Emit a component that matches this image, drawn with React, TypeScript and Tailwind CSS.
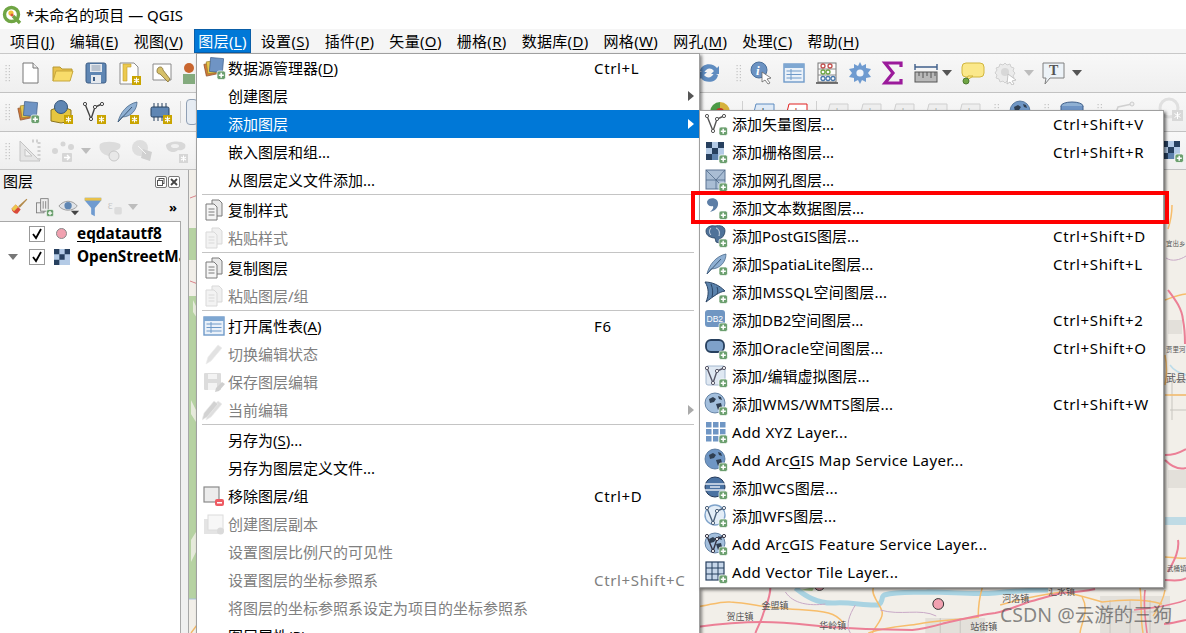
import type { ReactNode } from "react";

const Ic = ({ children, size = 24, box = 24 }: { children: ReactNode; size?: number; box?: number }) => (
  <svg width={size} height={size} viewBox={`0 0 ${box} ${box}`} className="flex-none">
    {children}
  </svg>
);

// badges
const Plus = () => (
  <g>
    <rect x="15" y="15" width="8.5" height="8.5" rx="2" fill="#6b9f6e" stroke="#fff" strokeWidth=".7" />
    <path d="M19.2 16.8v5M16.8 19.2h5" stroke="#fff" strokeWidth="1.5" />
  </g>
);
const Gear = ({ c = "#c9a400" }: { c?: string }) => (
  <g>
    <rect x="15" y="15" width="9" height="9" fill={c} />
    <path d="M19.5 16.5v6M17 18l5 3M22 18l-5 3" stroke="#fff" strokeWidth="1.1" />
  </g>
);

const LayersStack = () => (
  <>
    <rect x="3" y="7" width="12" height="12" fill="#d4793a" stroke="#8a4d22" strokeWidth=".7" transform="rotate(-12 9 13)" />
    <rect x="5" y="5" width="12" height="12" fill="#e9c84f" stroke="#9a8226" strokeWidth=".7" transform="rotate(-8 11 11)" />
    <rect x="8" y="2" width="13" height="14" fill="#6f94c4" stroke="#3f5f8a" strokeWidth=".7" transform="rotate(5 14 9)" />
  </>
);
const VectorV = ({ c = "#555" }: { c?: string }) => (
  <>
    <path d="M3 4l6 15 4-12 7-3" fill="none" stroke={c} strokeWidth="1.4" />
    <circle cx="3" cy="4" r="1.6" fill="#fff" stroke={c} />
    <circle cx="9" cy="19" r="1.6" fill="#fff" stroke={c} />
    <circle cx="13" cy="7" r="1.6" fill="#fff" stroke={c} />
    <circle cx="20" cy="4" r="1.6" fill="#fff" stroke={c} />
  </>
);
const Checker = () => (
  <>
    <rect x="2" y="2" width="18" height="18" fill="#b4cbe6" />
    <path d="M2 2h6v6H2zM14 2h6v6h-6zM8 8h6v6H8zM2 14h6v6H2z" fill="#27405f" />
    <path d="M8 14h6v6H8z" fill="#5e82ad" />
  </>
);
const Quill = () => (
  <>
    <path d="M3 22C5 13 12 4 22 2c0 8-6 15-15 15z" fill="#8fb0d3" stroke="#4a6a8c" strokeWidth=".8" />
    <path d="M3 22L17 7" stroke="#3f5a78" strokeWidth="1" />
  </>
);
const Globe = ({ dark = false }: { dark?: boolean }) => (
  <>
    <circle cx="11" cy="11" r="10" fill={dark ? "#6f96c4" : "#a3bfdd"} stroke="#4a6c93" strokeWidth=".8" />
    <path d="M5 7l4-2 3 2-2 3-4 1zM12 12l5-1 1 4-4 3zM14 4l3 1 1 3-3-1z" fill="#2f3f52" />
  </>
);
const DocCopy = ({ off = false }: { off?: boolean }) => {
  const s = off ? "#d9d9d9" : "#7b7b7b";
  return (
    <>
      <path d="M10 2h7l3 3v13H10z" fill={off ? "#f0f0f0" : "#e8e8e8"} stroke={s} />
      <path d="M4 6h8l3 3v13H4z" fill={off ? "#f3f3f3" : "#f5f5f5"} stroke={s} />
      <path d="M6.500 11h6M6.500 14h6M6.500 17h6" stroke={s} />
    </>
  );
};
const Pencil = ({ c = "#e2e2e2" }: { c?: string }) => (
  <path d="M4 22l2-7L16 3l4 3L9 19z" fill={c} stroke="#ececec" strokeWidth=".6" />
);
const Table = () => (
  <>
    <rect x="2" y="3" width="20" height="18" fill="#eaf1f9" stroke="#6f9ac9" strokeWidth="1.4" />
    <rect x="2" y="3" width="20" height="4" fill="#7ea7d2" />
    <path d="M4.500 10h15M4.500 13.500h15M4.500 17h15M9 8v11" stroke="#6f9ac9" />
  </>
);
const Grip = () => (
  <svg width="6" height="18" viewBox="0 0 6 18" className="flex-none">
    {[1, 4, 7, 10, 13, 16].map((y) => (
      <g key={y} fill="#c4c4c4">
        <rect x="0.5" y={y} width="1.2" height="1.2" />
        <rect x="3.8" y={y} width="1.2" height="1.2" />
      </g>
    ))}
  </svg>
);
const Drop = ({ off = false }: { off?: boolean }) => (
  <svg width="10" height="6" viewBox="0 0 10 6" className="flex-none">
    <path d="M0 0h10L5 6z" fill={off ? "#bdbdbd" : "#555"} />
  </svg>
);
const Cell = ({ children }: { children?: ReactNode }) => (
  <div className="flex w-[33px] flex-none items-center justify-center">{children}</div>
);

const AbcLabel = ({ c, bg, s }: { c: string; bg: string; s: string }) => (
  <svg width="24" height="20" viewBox="0 0 24 20" className="flex-none">
    <path d="M1 18L5 2h18v16z" fill={bg} stroke={s} />
    <text x="6" y="13" fontSize="9" fontFamily="Liberation Sans" fill={c}>abc</text>
  </svg>
);

// main menu data, & marks the mnemonic like in Qt
type Item = { t?: string; key?: string; icon?: ReactNode; off?: boolean; arrow?: boolean; hot?: boolean; sep?: boolean };

const mainItems: Item[] = [
  { t: "数据源管理器(&D)", key: "Ctrl+L", icon: <Ic><LayersStack /><Plus /></Ic> },
  { t: "创建图层", arrow: true },
  { t: "添加图层", arrow: true, hot: true },
  { t: "嵌入图层和组..." },
  { t: "从图层定义文件添加..." },
  { sep: true },
  { t: "复制样式", icon: <Ic><DocCopy /></Ic> },
  { t: "粘贴样式", off: true, icon: <Ic><DocCopy off /></Ic> },
  { sep: true },
  { t: "复制图层", icon: <Ic><DocCopy /></Ic> },
  { t: "粘贴图层/组", off: true, icon: <Ic><DocCopy off /></Ic> },
  { sep: true },
  { t: "打开属性表(&A)", key: "F6", icon: <Ic><Table /></Ic> },
  { t: "切换编辑状态", off: true, icon: <Ic><Pencil /></Ic> },
  {
    t: "保存图层编辑",
    off: true,
    icon: (
      <Ic>
        <rect x="2" y="3" width="17" height="17" rx="1" fill="#dcdcdc" />
        <rect x="6" y="4" width="9" height="5" fill="#f3f3f3" />
        <rect x="6" y="13" width="9" height="7" fill="#f3f3f3" />
        <path d="M13 22l1-4 6-6 3 2-6 7z" fill="#cfcfcf" />
      </Ic>
    ),
  },
  {
    t: "当前编辑",
    off: true,
    arrow: true,
    icon: (
      <Ic>
        <Pencil c="#dedede" />
        <g transform="translate(-4 0)"><Pencil c="#d2d2d2" /></g>
      </Ic>
    ),
  },
  { sep: true },
  { t: "另存为(&S)..." },
  { t: "另存为图层定义文件..." },
  {
    t: "移除图层/组",
    key: "Ctrl+D",
    icon: (
      <Ic>
        <rect x="2" y="3" width="15" height="15" fill="#ececec" stroke="#8a8a8a" strokeWidth="1.2" />
        <rect x="13" y="15" width="9" height="7" rx="2" fill="#ee5a62" />
        <rect x="15" y="18" width="5" height="1.5" fill="#fff" />
      </Ic>
    ),
  },
  {
    t: "创建图层副本",
    off: true,
    icon: (
      <Ic>
        <rect x="2" y="7" width="14" height="15" fill="#e4e4e4" />
        <rect x="6" y="3" width="15" height="15" fill="#f7f7f7" stroke="#dcdcdc" />
        <circle cx="18.500" cy="19" r="3.500" fill="#dadada" />
      </Ic>
    ),
  },
  { t: "设置图层比例尺的可见性", off: true },
  { t: "设置图层的坐标参照系", key: "Ctrl+Shift+C", off: true },
  { t: "将图层的坐标参照系设定为项目的坐标参照系", off: true },
  { t: "图层属性(&P)..." },
];

const subItems: Item[] = [
  { t: "添加矢量图层...", key: "Ctrl+Shift+V", icon: <Ic><VectorV /><Plus /></Ic> },
  { t: "添加栅格图层...", key: "Ctrl+Shift+R", icon: <Ic><Checker /><Plus /></Ic> },
  {
    t: "添加网孔图层...",
    icon: (
      <Ic>
        <rect x="2" y="2" width="19" height="19" fill="#a9bdd4" stroke="#5c7594" />
        <path d="M2 2l10 10L21 2M2 12h19M12 12v9M12 12L21 21" fill="none" stroke="#4f6a8a" strokeWidth=".8" />
        <Plus />
      </Ic>
    ),
  },
  {
    t: "添加文本数据图层...",
    icon: (
      <Ic>
        <path d="M5 3c5-2 10 1 9 6-1 4-4 6-8 7 2-2 4-4 3-6-3 1-6-1-6-4 0-1 1-2 2-3z" fill="#5d7ea6" />
        <Plus />
      </Ic>
    ),
  },
  {
    t: "添加PostGIS图层...",
    key: "Ctrl+Shift+D",
    icon: (
      <Ic>
        <path d="M2 7c0-4 5-6 9-5 5-1 10 0 10 5 0 4-3 7-5 8l-1 4-3-1-1-4C7 14 2 12 2 7z" fill="#4f7299" stroke="#26405e" strokeWidth=".8" />
        <path d="M7 4c-2 2-2 5 0 7M12 4c3 1 4 4 3 8" fill="none" stroke="#dfe8f2" strokeWidth=".9" />
        <Plus />
      </Ic>
    ),
  },
  { t: "添加SpatiaLite图层...", key: "Ctrl+Shift+L", icon: <Ic><Quill /><Plus /></Ic> },
  {
    t: "添加MSSQL空间图层...",
    icon: (
      <Ic>
        <path d="M1 2c7 0 14 3 20 9-6 1-11 5-19 11 3-7 3-14-1-20z" fill="#5b83ad" stroke="#2a4566" />
        <path d="M7 4c2 5 2 9 1 13M13 7c1 3 1 5 0 7" stroke="#2a4566" fill="none" />
        <Plus />
      </Ic>
    ),
  },
  {
    t: "添加DB2空间图层...",
    key: "Ctrl+Shift+2",
    icon: (
      <Ic>
        <rect x="1" y="2" width="20" height="17" rx="3" fill="#7096c2" />
        <text x="2.500" y="14" fontSize="8.500" fontFamily="Liberation Sans" fill="#fff">DB2</text>
        <Plus />
      </Ic>
    ),
  },
  {
    t: "添加Oracle空间图层...",
    key: "Ctrl+Shift+O",
    icon: (
      <Ic>
        <rect x="2" y="4" width="18" height="12" rx="5" fill="#7ea1c9" stroke="#27405f" strokeWidth="1.8" />
        <Plus />
      </Ic>
    ),
  },
  {
    t: "添加/编辑虚拟图层...",
    icon: (
      <Ic>
        <rect x="2" y="2" width="19" height="19" rx="2" fill="#dfe8f2" stroke="#a4b8cf" />
        <VectorV c="#556" />
        <Plus />
      </Ic>
    ),
  },
  { t: "添加WMS/WMTS图层...", key: "Ctrl+Shift+W", icon: <Ic><Globe /><Plus /></Ic> },
  {
    t: "Add XYZ Layer...",
    icon: (
      <Ic>
        <g fill="#6f96c4">
          {[2, 9, 16].map((y) => [2, 9, 16].map((x) => <rect key={`${x}-${y}`} x={x} y={y} width="5.500" height="5.500" />))}
        </g>
        <Plus />
      </Ic>
    ),
  },
  { t: "Add Arc&GIS Map Service Layer...", icon: <Ic><Globe dark /><Plus /></Ic> },
  {
    t: "添加WCS图层...",
    icon: (
      <Ic>
        <circle cx="11" cy="11" r="10" fill="#4a72a2" stroke="#23395a" />
        <path d="M1 8h20M1 14h20M6 11h10" stroke="#dfe8f2" strokeWidth="1.6" />
        <Plus />
      </Ic>
    ),
  },
  {
    t: "添加WFS图层...",
    icon: (
      <Ic>
        <circle cx="11" cy="11" r="10" fill="#e3edf7" stroke="#7fa3ca" strokeWidth="1.4" />
        <VectorV c="#4a5f78" />
        <Plus />
      </Ic>
    ),
  },
  {
    t: "Add Ar&cGIS Feature Service Layer...",
    icon: (
      <Ic>
        <Globe />
        <VectorV c="#334" />
        <Plus />
      </Ic>
    ),
  },
  {
    t: "Add Vector Tile Layer...",
    icon: (
      <Ic>
        <rect x="2" y="2" width="18" height="18" fill="#c7d7ea" stroke="#27405f" strokeWidth="1.2" />
        <path d="M8 2v18M14 2v18M2 8h18M2 14h18" stroke="#27405f" />
        <Plus />
      </Ic>
    ),
  },
];

const Mn = ({ t }: { t: string }) => {
  const i = t.indexOf("&");
  if (i < 0) return <>{t}</>;
  return (
    <>
      {t.slice(0, i)}
      <u className="underline-offset-2">{t[i + 1]}</u>
      {t.slice(i + 2)}
    </>
  );
};

// Latin in the reference font runs wider than Noto Sans, so those rows get some tracking
const tracking = (t: string) => {
  if (t.startsWith("Add")) return "tracking-[0.37px]";
  if (/WMS|WCS|WFS|MSSQL|Oracle/.test(t)) return "tracking-[0.25px]";
  return "";
};

const Row = ({ it, textW, iconW, pad = "" }: { it: Item; textW: string; iconW: string; pad?: string }) => {
  if (it.sep) return <div className="mx-[5px] mb-px h-px bg-[#c4c4c4]" />;
  const color = it.hot ? "bg-[#0078d7] text-white" : it.off ? "text-[#808080]" : "text-black";
  return (
    <div className={`flex h-[28px] flex-none items-center ${pad} ${color}`}>
      <div className={`flex flex-none justify-center ${iconW}`}>{it.icon}</div>
      <div className={`${textW} flex-none whitespace-nowrap ${tracking(it.t || "")}`}><Mn t={it.t || ""} /></div>
      <div className="whitespace-nowrap tracking-[0.65px]">{it.key}</div>
      {it.arrow && (
        <svg width="6" height="10" viewBox="0 0 6 10" className="absolute left-[491px]">
          <path d="M0 0l6 5-6 5z" fill={it.hot ? "#fff" : it.off ? "#aaa" : "#555"} />
        </svg>
      )}
    </div>
  );
};

const menus = [
  "项目(&J)",
  "编辑(&E)",
  "视图(&V)",
  "图层(&L)",
  "设置(&S)",
  "插件(&P)",
  "矢量(&O)",
  "栅格(&R)",
  "数据库(&D)",
  "网格(&W)",
  "网孔(&M)",
  "处理(&C)",
  "帮助(&H)",
];

const QLogo = () => (
  <svg width="20" height="20" viewBox="0 0 20 20" className="flex-none">
    <circle cx="9.500" cy="9.500" r="7" fill="#fff" stroke="#6fa544" strokeWidth="3.400" />
    <path d="M11 11l7 7" stroke="#6fa544" strokeWidth="3.400" />
    <circle cx="9" cy="8" r="2.600" fill="#f0c23c" />
    <circle cx="10" cy="10" r="1.600" fill="#d8553a" />
  </svg>
);

// the map: roads and labels only show at the edges of the open menus
const MapView = () => (
  <svg viewBox="188 170 998 463" className="h-full w-full" preserveAspectRatio="none">
    <rect x="188" y="170" width="998" height="463" fill="#f2efe9" />
    <path d="M188 228h9v32h-9zM188 296h9v303h-9z" fill="#b6d2a2" />
    <path d="M190 540l5-8v20l-5 10zM190 400l5 10v12l-5-8zM192 300l4 8v10l-4-6z" fill="#e6eadb" />
    <path d="M188 599h9" stroke="#a8c0dc" />
    <path d="M190 633l6-8" stroke="#f2b866" strokeWidth="1.400" />
    <path d="M189 281l8 3M189 198l8-3" stroke="#d9848a" />
    {/* rivers */}
    <path d="M795 588c10 8 22 16 40 15 16-1 30 3 43 2 6-4 2-8 6-10 14-4 30-2 44-3 24 0 46 3 67 1 20-2 36-3 53-3" fill="none" stroke="#a9d3e2" strokeWidth="5" />
    <path d="M1165 517h21v8h-21zM1165 430l21 3" fill="#a9d3e2" opacity=".7" />
    <path d="M1170 365c4 6 10 8 16 10" stroke="#bcdcea" strokeWidth="1.500" fill="none" />
    {/* grey urban patches */}
    <path d="M1168 320h14v14h-14zM1168 470h18v18h-18zM1100 596h70v37h-70zM925 618h60v15h-60z" fill="#e3e0da" />
    <path d="M1170 380h16M1170 395h16M1170 410h16M1172 380v40M1110 600v33M1130 600v33M1150 600v33M1100 612h70M940 618v15M960 618v15" stroke="#c8c5bf" />
    {/* orange roads */}
    <g fill="none" stroke="#f7bd6b" strokeWidth="1.500">
      <path d="M696 607c14-2 24-6 34-5 18 1 32 5 48 6 20 2 38 2 50 5 8 2 12 6 15 10" />
      <path d="M873 588c-3 8 9 18 9 25 0 8-8 14-10 20" />
      <path d="M982 588c-3 10-4 20-4 29-22 3-44 4-60 7-10 2-30 2-50 9" />
      <path d="M1000 605c20-6 40-10 62-13 14 2 26 6 40 10 18-2 40-4 60 2" />
      <path d="M1172 205c0 8-2 18-4 24M1165 300c6-2 12-5 21-6M1165 355c2 10 2 20 0 30M1165 395h21M1165 557c6 0 14 2 21 1M1165 590c-2 12-8 20-12 26" />
      <path d="M1140 588c2 14 0 30 3 45M1080 633c0-8 10-22 2-36" />
    </g>
    {/* pink trunk roads */}
    <g fill="none" stroke="#ec7f96" strokeWidth="2">
      <path d="M696 627c22-3 44-5 66-5 24 0 44 3 66 5 28 2 56 3 84 3 12-1 22-4 33-7 18-4 34-8 50-10 12-2 22-7 33-11 12-3 24-7 34-9 14-1 24-2 33-4" />
      <path d="M770 587c0 10-4 18-7 26-2 8-6 14-8 20" />
      <path d="M1145 590c-2 14 0 28 2 43M1186 600c-16 6-34 8-52 10" strokeWidth="1.600" />
      <path d="M1168 290c6 8 14 18 15 30 2 10 2 16 2 24M1165 455c8 0 14-2 21-6M1165 460c6 6 14 10 21 8M1178 540c2 12-6 24-10 32M1165 580c8 0 14 2 21-2M1186 620c-10 2-16 4-22 4" />
    </g>
    {/* purple boundaries */}
    <g fill="none" stroke="#c8a9c6">
      <path d="M855 605c-6 10-10 20-5 28M785 592c8 12 24 14 40 12M880 610c20 6 40-2 56 6" />
      <path d="M1166 258c6 4 14 2 20-2" />
    </g>
    <path d="M800 590l14-3-2 4z" fill="#9ec183" />
    <circle cx="938" cy="604" r="5.400" fill="#f1a1b0" stroke="#333" />
    <circle cx="819" cy="585" r="5.400" fill="#f1a1b0" stroke="#333" />
    <g fontSize="9" fill="#555" fontFamily="Noto Sans CJK SC, sans-serif">
      <text x="761" y="609">金盟镇</text>
      <text x="726" y="620">贺庄镇</text>
      <text x="819" y="629">华岭镇</text>
      <text x="1002" y="602">河洛镇</text>
      <text x="970" y="630">站街镇</text>
      <text x="1048" y="595">汇水镇</text>
      <text x="1166" y="246" fontSize="6.500">宜出乡</text>
      <text x="1166" y="352" fontSize="6.500">贾里河</text>
      <text x="1166" y="382" fontSize="10">武县</text>
      <text x="1167" y="571" fontSize="6.500">武桶镇</text>
    </g>
  </svg>
);

export default function App() {
  return (
    <div className="relative flex h-[633px] w-[1186px] flex-col overflow-hidden bg-[#f0f0f0] font-['Noto_Sans','Noto_Sans_CJK_SC',sans-serif] text-[15px] leading-none text-black">
      {/* title bar */}
      <div className="flex h-[29px] flex-none items-center gap-[4px] bg-white pl-[2px]">
        <QLogo />
        <span className="pt-[1px]">*未命名的项目 — QGIS</span>
      </div>

      {/* menu bar */}
      <div className="flex h-[25px] flex-none items-stretch border-b border-[#c8c8c8] bg-[#f5f5f5] pl-[3px]">
        {menus.map((m, i) => (
          <div
            key={m}
            className={`flex items-center whitespace-nowrap tracking-[0.32px] ${
              i === 3 ? "ml-[3px] mr-[3px] border border-[#0a5ea8] bg-[#0078d7] px-[3px] text-white" : "mr-[1px] px-[7px]"
            }`}
          >
            <Mn t={m} />
          </div>
        ))}
      </div>

      {/* toolbar 1 */}
      <div className="flex h-[39px] flex-none items-center border-b border-[#c2c2c2] bg-linear-to-b from-[#f8f8f8] to-[#efefef] pl-[5px]">
        <Grip />
        <div className="w-[2px]" />
        <Cell>
          <Ic>
            <path d="M5 2h10l5 5v15H5z" fill="#fff" stroke="#777" />
            <path d="M15 2v5h5" fill="#eee" stroke="#777" />
          </Ic>
        </Cell>
        <Cell>
          <Ic>
            <path d="M2 20V6h7l2 2h10v3" fill="#e8c14b" stroke="#b89a34" />
            <path d="M2 20l3-10h17l-3 10z" fill="#f8dc6a" stroke="#c7a73d" />
          </Ic>
        </Cell>
        <Cell>
          <Ic>
            <rect x="2" y="2" width="20" height="20" rx="2" fill="#5f86b3" stroke="#3c5d85" />
            <rect x="6" y="3" width="12" height="8" fill="#e5e9ee" />
            <path d="M7.500 5h9M7.500 7h9M7.500 9h9" stroke="#8b9bb0" />
            <rect x="7" y="14" width="10" height="8" fill="#e5e9ee" />
            <rect x="9" y="16" width="2" height="4" fill="#3c5d85" />
          </Ic>
        </Cell>
        <Cell>
          <Ic>
            <path d="M3 2h14l4 4v17H3z" fill="#fdfdfd" stroke="#8a8a8a" />
            <path d="M6 3h8v3h-4v14H6z" fill="#ecc94f" stroke="#c59f2a" strokeWidth=".6" />
            <Gear />
          </Ic>
        </Cell>
        <Cell>
          <Ic>
            <path d="M3 3h18v16H3z" fill="#fff" stroke="#8a8a8a" />
            <path d="M8 7c2-2 5-1 5 2l7 9-2 3-8-8c-3 0-4-3-2-6z" fill="#d6c069" stroke="#75602a" strokeWidth=".7" />
          </Ic>
        </Cell>
        <div className="ml-[5px] flex w-[20px] flex-none flex-col items-start gap-[1px]">
          <div className="ml-[1px] h-[10px] w-[10px] rounded-full bg-[#c9662f]" />
          <div className="h-[10px] w-[12px] bg-[#84ab7e]" />
        </div>
        <div className="w-[494px] flex-none" />
        <Ic>
          <path d="M3 10c1-8 13-9 17-3l2-2v8h-8l3-3c-3-4-8-3-10 2z" fill="#5f8cc0" />
          <path d="M21 14c-1 8-13 9-17 3l-2 2v-8h8l-3 3c3 4 8 3 10-2z" fill="#5f8cc0" />
        </Ic>
        <div className="ml-[15px] mr-[2px]"><Grip /></div>
        <Cell>
          <Ic>
            <circle cx="10" cy="9" r="8" fill="#6b92c2" stroke="#4a6f9b" />
            <text x="7" y="14" fontSize="13" fontStyle="italic" fontWeight="700" fill="#fff" fontFamily="Liberation Serif">i</text>
            <path d="M13 11l9 6-4 1 3 4-2 1-3-4-3 2z" fill="#fff" stroke="#666" strokeWidth=".8" />
          </Ic>
        </Cell>
        <Cell><Ic><Table /></Ic></Cell>
        <Cell>
          <Ic>
            <rect x="3" y="2" width="18" height="19" fill="#fdfdfd" stroke="#777" />
            <path d="M1 22h22" stroke="#555" strokeWidth="1.600" />
            <path d="M3 8h18M3 14h18" stroke="#888" />
            <g fill="none" strokeWidth="1.300">
              <circle cx="8" cy="5" r="2" stroke="#c0504d" />
              <circle cx="15" cy="5" r="2" stroke="#c0504d" />
              <circle cx="8" cy="11" r="2" stroke="#6fa544" />
              <circle cx="13" cy="11" r="2" stroke="#6fa544" />
              <circle cx="8" cy="17.500" r="2" stroke="#4a78ab" />
              <circle cx="13" cy="17.500" r="2" stroke="#4a78ab" />
              <circle cx="18" cy="17.500" r="2" stroke="#4a78ab" />
            </g>
          </Ic>
        </Cell>
        <Cell>
          <Ic>
            <path d="M12 1l2 4 4-2 0 4 5 1-3 4 3 4-5 1 0 4-4-2-2 4-2-4-4 2 0-4-5-1 3-4-3-4 5-1 0-4 4 2z" fill="#6f9bd0" />
            <circle cx="12" cy="12" r="3.600" fill="#f0f4f9" />
          </Ic>
        </Cell>
        <Cell>
          <Ic>
            <path d="M20 6V2H4l8 10-8 10h16v-4" fill="none" stroke="#9b1a9b" strokeWidth="3.200" />
          </Ic>
        </Cell>
        <Cell>
          <Ic>
            <path d="M1 6h22M1 3v6M23 3v6" stroke="#3f5f8a" strokeWidth="1.400" />
            <rect x="1" y="11" width="22" height="10" fill="#b9b9b9" stroke="#555" />
            <path d="M5 11v4M9 11v6M13 11v4M17 11v6M21 11v4" stroke="#555" />
          </Ic>
        </Cell>
        <div className="mr-[4px]"><Drop /></div>
        <Cell>
          <Ic>
            <rect x="1" y="2" width="22" height="14" rx="4" fill="#fbe88a" stroke="#d1b63e" />
            <path d="M7 15l-2 5 7-5z" fill="#fbe88a" stroke="#d1b63e" />
            <circle cx="5" cy="20" r="3" fill="#6fa544" stroke="#4d7a30" />
          </Ic>
        </Cell>
        <Cell>
          <Ic>
            <path d="M11 2l2 2 3-1 1 3 3 1-1 3 2 2-2 3 1 2-3 1-1 3-3-1-2 2-2-2-3 1-1-3-3-1 1-3-2-2 2-3-1-2 3-1 1-3 3 1z" fill="#ebebeb" stroke="#d0d0d0" />
            <circle cx="11" cy="11" r="4" fill="#d8d8d8" />
            <path d="M14 13l8 6-4 1 2 3-2 1-2-3-3 2z" fill="#fff" stroke="#c4c4c4" />
          </Ic>
        </Cell>
        <div className="ml-[2px] mr-[3px]"><Drop off /></div>
        <Cell>
          <Ic>
            <path d="M1 2h21v15H8l-5 6 1-6H1z" fill="#edf3f8" stroke="#808080" />
            <text x="7" y="14" fontSize="14" fontWeight="700" fill="#555" fontFamily="Liberation Serif">T</text>
          </Ic>
        </Cell>
        <div className="ml-[2px]"><Drop /></div>
      </div>

      {/* toolbar 2 */}
      <div className="flex h-[39px] flex-none items-center border-b border-[#c2c2c2] bg-linear-to-b from-[#f8f8f8] to-[#efefef] pl-[5px]">
        <Grip />
        <div className="w-[2px]" />
        <Cell><Ic><LayersStack /><Plus /></Ic></Cell>
        <Cell>
          <Ic>
            <path d="M2 10l10-4 10 4v11l-10 2-10-2z" fill="#e6c640" stroke="#8a7420" />
            <circle cx="12" cy="7" r="6.500" fill="#5f86b3" stroke="#35557a" />
            <Gear />
          </Ic>
        </Cell>
        <Cell><Ic><VectorV c="#444" /><Gear /></Ic></Cell>
        <Cell><Ic><Quill /><Gear /></Ic></Cell>
        <Cell>
          <Ic>
            <rect x="3" y="7" width="18" height="10" rx="1.500" fill="#5f86b3" stroke="#27405f" />
            <path d="M6 3v20M10 3v20M14 3v20M18 3v20" stroke="#27405f" strokeDasharray="4 10" />
            <Gear />
          </Ic>
        </Cell>
        <div className="ml-[4px] mr-[5px] h-[22px] w-px flex-none bg-[#d0d0d0]" />
        <div className="h-[26px] w-[12px] flex-none rounded border border-[#90a0b5] bg-[#e6ecf3]" />
        <div className="w-[510px] flex-none" />
        <Ic>
          <path d="M2 12a10 10 0 0 1 10-10v10z" fill="#4c9a45" />
          <path d="M12 2a10 10 0 0 1 10 10H12z" fill="#d6b23b" />
          <circle cx="12" cy="12" r="4" fill="#c0392b" />
        </Ic>
        <div className="ml-[10px] mr-[3px] h-[22px] w-px flex-none bg-[#d0d0d0]" />
        <Cell><AbcLabel c="#234" bg="#dfeaf6" s="#5f8cc0" /></Cell>
        <Cell><AbcLabel c="#a00" bg="#fff" s="#e02020" /></Cell>
        <div className="ml-[4px] mr-[3px] h-[22px] w-px flex-none bg-[#d0d0d0]" />
        {[0, 1, 2, 3, 4].map((i) => (
          <Cell key={i}><AbcLabel c="#aaa" bg="#eee" s="#cfcfcf" /></Cell>
        ))}
        <div className="ml-[9px]"><Grip /></div>
        <div className="ml-[9px]"><Ic><Globe dark /></Ic></div>
        <div className="ml-[11px]"><Grip /></div>
        <div className="ml-[10px]">
          <Ic>
            <ellipse cx="12" cy="6" rx="11" ry="4" fill="#8fb0d3" stroke="#3f5f8a" />
            <path d="M1 6v14h22V6" fill="#6f94c4" stroke="#3f5f8a" />
          </Ic>
        </div>
        <div className="ml-[13px]"><Grip /></div>
        <div className="ml-[9px]">
          <Ic>
            <path d="M2 18l4-11 14-3" fill="none" stroke="#d0d0d0" strokeWidth="1.500" />
            <circle cx="20" cy="4" r="2" fill="#eee" stroke="#ccc" />
          </Ic>
        </div>
        <div className="ml-[21px] flex-none">
          <Ic size={32} box={32}>
            <circle cx="12" cy="12" r="9" fill="none" stroke="#e0e0e0" strokeWidth="3" />
            <rect x="15" y="14" width="11" height="11" fill="#d8d8d8" />
            <path d="M20.500 16v7M17.500 17.500l6 4M23.500 17.500l-6 4" stroke="#fff" />
          </Ic>
        </div>
      </div>

      {/* toolbar 3 */}
      <div className="flex h-[38px] flex-none items-center border-b border-[#c2c2c2] bg-linear-to-b from-[#f8f8f8] to-[#efefef] pl-[5px]">
        <Grip />
        <div className="w-[2px]" />
        <Cell>
          <Ic>
            <path d="M2 22L2 2l20 20zM7 17h7L7 10z" fill="#e5e5e5" fillRule="evenodd" stroke="#c4c4c4" />
            <path d="M14 2h7v20" fill="none" stroke="#d0d0d0" strokeDasharray="2 2" strokeWidth="3" />
          </Ic>
        </Cell>
        <Cell>
          <Ic>
            <g fill="#d6d6d6">
              <circle cx="4" cy="12" r="3" />
              <circle cx="12" cy="5" r="2.500" />
              <circle cx="20" cy="8" r="3" />
            </g>
            <rect x="11" y="14" width="10" height="9" rx="1" fill="#d6d6d6" />
            <path d="M13 18.500h5M16 16l2.500 2.500L16 21" fill="none" stroke="#fff" strokeWidth="1.400" />
          </Ic>
        </Cell>
        <div className="ml-[2px] mr-[2px]"><Drop off /></div>
        <Cell>
          <Ic>
            <path d="M2 5c4-3 14-3 20 0 2 4-2 6-6 7 0 5-4 6-8 4-4-1-8-6-6-11z" fill="#dcdcdc" />
            <circle cx="16" cy="17" r="5" fill="#e8e8e8" stroke="#c8c8c8" />
          </Ic>
        </Cell>
        <Cell>
          <Ic>
            <circle cx="9" cy="9" r="8" fill="#dedede" />
            <path d="M12 10l9 3-2 9-9-3z" fill="#d0d0d0" />
            <path d="M7 7l8 8" stroke="#f5f5f5" />
          </Ic>
        </Cell>
        <Cell>
          <Ic>
            <path d="M2 6c3-4 15-5 19-1 2 5-3 7-7 6-4 4-12 2-12-5z" fill="#d8d8d8" />
            <ellipse cx="11" cy="7" rx="4" ry="2" fill="#f0f0f0" />
            <Gear c="#d6d6d6" />
          </Ic>
        </Cell>
        <div className="w-[968px] flex-none" />
        <Ic><Checker /><Plus /></Ic>
      </div>

      {/* main area */}
      <div className="flex min-h-0 flex-1">
        <div className="flex w-[181px] flex-none flex-col">
          <div className="flex h-[23px] flex-none items-center justify-between pl-[3px] pr-[1px]">
            <span className="text-[15px]">图层</span>
            <div className="flex gap-[1px]">
              <svg width="12" height="12" viewBox="0 0 12 12">
                <rect x=".5" y=".5" width="11" height="11" rx="1.5" fill="#fff" stroke="#777" />
                <rect x="4" y="2.5" width="5" height="5" fill="none" stroke="#555" />
                <rect x="2.5" y="4.5" width="5" height="5" fill="#fff" stroke="#555" />
              </svg>
              <svg width="12" height="12" viewBox="0 0 12 12">
                <rect x=".5" y=".5" width="11" height="11" rx="1.5" fill="#fff" stroke="#777" />
                <path d="M3 3l6 6M9 3l-6 6" stroke="#444" strokeWidth="1.8" />
              </svg>
            </div>
          </div>
          <div className="flex h-[28px] flex-none items-center pl-[6px]">
            <div className="flex w-[25px] flex-none justify-center">
              <Ic size={20}>
                <path d="M3 14l5-5 6 6-4 5c-3 0-6-2-7-6z" fill="#d94a3a" />
                <path d="M3 14l5-5 3 3-5 5z" fill="#ecc94f" />
                <path d="M11 11l10-9 1 1-9 10z" fill="#b38a4a" />
              </Ic>
            </div>
            <div className="flex w-[25px] flex-none justify-center">
              <Ic size={20}>
                <rect x="3" y="7" width="9" height="12" fill="#eee" stroke="#777" />
                <rect x="8" y="2" width="9" height="15" fill="#eee" stroke="#777" />
                <path d="M11 5v9M14 5v9" stroke="#777" />
                <Plus />
              </Ic>
            </div>
            <div className="flex w-[25px] flex-none justify-center">
              <Ic size={22}>
                <path d="M1 11c5-7 15-7 20 0-5 6-15 6-20 0z" fill="#dfe3e8" stroke="#999" />
                <circle cx="11" cy="10.500" r="4" fill="#5f86b3" />
                <path d="M14 16h9l-4.500 5z" fill="#444" />
              </Ic>
            </div>
            <div className="flex w-[23px] flex-none justify-center">
              <Ic size={22}>
                <path d="M3 2h18v3l-7 8v9l-4-2v-7L3 5z" fill="#6f9bd0" />
                <path d="M3 2h18v3H3z" fill="#e8c14b" />
              </Ic>
            </div>
            <div className="flex w-[24px] flex-none justify-center">
              <Ic size={20}>
                <text x="2" y="14" fontSize="14" fill="#c8c8c8" fontFamily="Liberation Serif">ε</text>
                <rect x="10" y="12" width="9" height="9" rx="2" fill="#dcdcdc" />
              </Ic>
            </div>
            <Drop off />
            <span className="ml-auto mr-[4px] text-[13px] font-bold">»</span>
          </div>
          <div className="flex-1 overflow-hidden border-r border-t border-[#a8a8a8] bg-white text-[15.3px] font-bold">
            <div className="flex h-[23px] items-center">
              <div className="ml-[29px] flex h-[16px] w-[16px] flex-none items-center justify-center border border-[#999] bg-white">
                <svg width="12" height="12" viewBox="0 0 12 12"><path d="M2 6l3 4 5-9" fill="none" stroke="#000" strokeWidth="1.8" /></svg>
              </div>
              <div className="ml-[11px] h-[11px] w-[11px] flex-none rounded-full border border-[#888] bg-[#f1a1b0]" />
              <span className="ml-[10px] underline underline-offset-2">eqdatautf8</span>
            </div>
            <div className="flex h-[23px] items-center whitespace-nowrap">
              <svg width="10" height="6" viewBox="0 0 10 6" className="ml-[8px] flex-none"><path d="M0 0h10L5 6z" fill="#777" /></svg>
              <div className="ml-[11px] flex h-[16px] w-[16px] flex-none items-center justify-center border border-[#999] bg-white">
                <svg width="12" height="12" viewBox="0 0 12 12"><path d="M2 6l3 4 5-9" fill="none" stroke="#000" strokeWidth="1.8" /></svg>
              </div>
              <div className="ml-[9px] flex-none">
                <Ic size={16} box={18}>
                  <rect width="18" height="18" fill="#b4cbe6" />
                  <path d="M0 0h6v6H0zM12 0h6v6h-6zM6 6h6v6H6zM0 12h6v6H0z" fill="#27405f" />
                </Ic>
              </div>
              <span className="ml-[7px]">OpenStreetMap</span>
            </div>
          </div>
        </div>
        <div className="w-[7px] flex-none" />
        <div className="relative min-w-0 flex-1 border-l border-[#a8a8a8]">
          <MapView />
          <span className="absolute left-[811px] top-[435px] whitespace-nowrap text-[19.5px] text-[#555]/70">
            CSDN @云游的三狗
          </span>
        </div>
      </div>

      {/* 图层 menu */}
      <div className="absolute left-[196px] top-[53px] flex h-[600px] w-[504px] flex-col border border-[#a0a0a0] bg-white shadow-[2px_2px_3px_rgba(0,0,0,0.45)]">
        {mainItems.map((it, i) => (
          <Row key={i} it={it} textW="w-[366px]" iconW="w-[31px] pl-[2px]" />
        ))}
      </div>

      {/* 添加图层 submenu */}
      <div className="absolute left-[699px] top-[110px] flex w-[465px] flex-col border border-[#a0a0a0] bg-white shadow-[2px_2px_3px_rgba(0,0,0,0.55)]">
        {subItems.map((it, i) => (
          <Row key={i} it={it} textW="w-[321px]" iconW="w-[32px]" pad="pb-[2px]" />
        ))}
      </div>

      {/* annotation on the screenshot */}
      <div className="absolute left-[691px] top-[191px] h-[33px] w-[478px] border-4 border-[#ff0000]" />
    </div>
  );
}
